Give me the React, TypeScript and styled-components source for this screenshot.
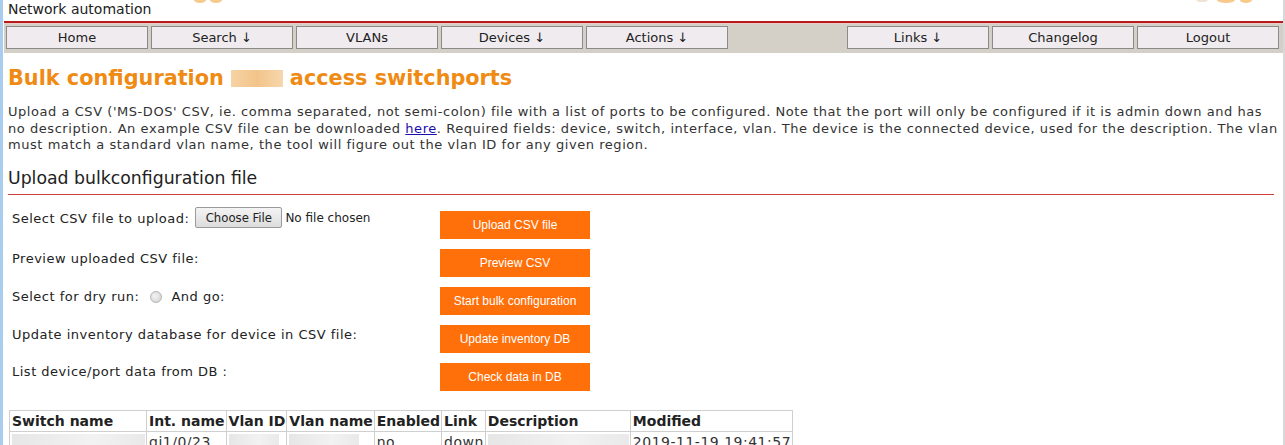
import React from 'react';
import styled, { createGlobalStyle } from 'styled-components';

const GlobalStyle = createGlobalStyle`
  html, body {
    margin: 0;
    padding: 0;
    background: #fff;
  }
  body {
    font-family: 'DejaVu Sans', Verdana, sans-serif;
    color: #222;
    overflow: hidden;
  }
`;

const condensed = `'DejaVu Sans Condensed', 'DejaVu Sans', Verdana, sans-serif`;

const Page = styled.div`
  min-height: 445px;
  border-left: 3px solid #a9cdee;
  border-right: 2px solid #d8d8d8;
  box-sizing: border-box;
  padding-left: 1px;
`;

const Header = styled.div`
  position: relative;
  height: 21px;
  padding-left: 4px;
  border-bottom: 2px solid #b51c1c;
  box-shadow: 0 1px 0 #f0c8c8;
`;

const SiteName = styled.div`
  font-size: 14px;
  line-height: 19px;
  color: #222;
`;

const LogoBits = styled.svg`
  position: absolute;
  top: 0;
`;

const NavBar = styled.nav`
  display: flex;
  gap: 3px;
  margin-top: 1px;
  padding: 2px 4px 4px 2px;
  background: #d4d0c8;
`;

const NavButton = styled.div`
  width: 140px;
  height: 21px;
  box-sizing: content-box;
  border: 1px solid #8a8a8a;
  background: #efebef;
  font-size: 13px;
  line-height: 21px;
  text-align: center;
  color: #222;
  cursor: pointer;
`;

const Spacer = styled.div`
  flex: 1;
`;

const Content = styled.main`
  padding: 0 3px 0 4px;
`;

const Title = styled.h1`
  margin: 12px 0 0;
  font-size: 20.8px;
  font-weight: bold;
  color: #ef8b13;
  line-height: 26px;
  display: flex;
  align-items: center;
  gap: 7px;
`;

const Redacted = styled.span<{ $w: number }>`
  display: inline-block;
  width: ${(p) => p.$w}px;
  height: 17px;
  background: linear-gradient(90deg, #f6d3a4, #f2c48a 50%, #f7d7ad);
`;

const Intro = styled.p`
  margin: 13px 0 0;
  font-size: 13px;
  letter-spacing: 0.55px;
  line-height: 16.5px;
  color: #333;

  a {
    color: #1a0dab;
    text-decoration: underline;
  }
`;

const SectionTitle = styled.h2`
  margin: 13px 6px 0 0;
  padding-bottom: 5px;
  font-size: 17.3px;
  font-weight: normal;
  color: #222;
  line-height: 22px;
  border-bottom: 1px solid #d0413d;
`;

const Form = styled.div`
  display: grid;
  grid-template-columns: 428px 150px;
  row-gap: 10px;
  padding: 16px 0 0 4px;
`;

const Label = styled.div<{ $top?: number }>`
  display: flex;
  align-items: flex-start;
  gap: 6px;
  font-size: 13px;
  letter-spacing: 0.5px;
  line-height: 16px;
  color: #222;
  white-space: nowrap;
  padding-top: ${(p) => p.$top ?? 2}px;
`;

const FileInput = styled.input`
  font-family: 'DejaVu Sans', Verdana, sans-serif;
  font-size: 12px;
  letter-spacing: 0;
  margin-top: -4px;
  color: #222;

  &::file-selector-button {
    font-family: ${condensed};
    font-stretch: condensed;
    font-size: 13px;
    height: 21px;
    width: 87px;
    padding: 0 4px;
    margin-right: 3px;
    border: 1px solid #9a9a9a;
    border-radius: 2px;
    background: linear-gradient(#f4f4f4, #dcdcdc);
    color: #222;
  }
`;

const Radio = styled.span`
  display: inline-block;
  width: 10px;
  height: 10px;
  margin: 2px 3px 0 5px;
  border-radius: 50%;
  border: 1px solid #b5b5b5;
  background: radial-gradient(circle at 40% 40%, #f4f4f4, #cfcfcf);
`;

const ActionButton = styled.button`
  width: 150px;
  height: 28px;
  border: none;
  background: #ff6f0a;
  color: #fff;
  font-family: 'Liberation Sans', Arial, sans-serif;
  font-size: 12px;
  cursor: pointer;
  padding: 0;
`;

const TableWrap = styled.div`
  padding: 19px 0 0 1px;
`;

const Table = styled.table`
  border-collapse: collapse;

  th,
  td {
    border: 1px solid #cfcfcf;
    padding: 0 1px 0 2px;
    height: 20px;
    text-align: left;
    white-space: nowrap;
  }

  th {
    font-size: 14px;
    font-weight: bold;
    color: #222;
  }

  td {
    font-size: 14px;
    letter-spacing: 0.5px;
    color: #333;
  }
`;

const Blur = styled.span<{ $w: number }>`
  display: inline-block;
  width: ${(p) => p.$w}px;
  height: 16px;
  vertical-align: middle;
  background: linear-gradient(90deg, #e6e6e6, #f2f2f2 60%, #e9e9e9);
`;

const navLeft = ['Home', 'Search ↓', 'VLANs', 'Devices ↓', 'Actions ↓'];
const navRight = ['Links ↓', 'Changelog', 'Logout'];

const columns = [
  'Switch name',
  'Int. name',
  'Vlan ID',
  'Vlan name',
  'Enabled',
  'Link',
  'Description',
  'Modified',
];

export default function App() {
  return (
    <Page>
      <GlobalStyle />
      <Header>
        <SiteName>Network automation</SiteName>
        <LogoBits width="40" height="5" style={{ left: 186 }}>
          <ellipse cx="10" cy="0" rx="6" ry="3" fill="#f3b35a" opacity="0.7" />
          <ellipse cx="26" cy="0" rx="6" ry="3" fill="#f3b35a" opacity="0.7" />
        </LogoBits>
        <LogoBits width="70" height="5" style={{ left: 1186 }}>
          <ellipse cx="12" cy="0" rx="6" ry="2" fill="#e8d9c0" opacity="0.7" />
          <ellipse cx="36" cy="0" rx="9" ry="3" fill="#f3b35a" opacity="0.7" />
          <ellipse cx="56" cy="0" rx="6" ry="3" fill="#f3b35a" opacity="0.7" />
        </LogoBits>
      </Header>
      <NavBar>
        {navLeft.map((n) => (
          <NavButton key={n}>{n}</NavButton>
        ))}
        <Spacer />
        {navRight.map((n) => (
          <NavButton key={n}>{n}</NavButton>
        ))}
      </NavBar>
      <Content>
        <Title>
          Bulk configuration <Redacted $w={52} /> access switchports
        </Title>
        <Intro>
          Upload a CSV ('MS-DOS' CSV, ie. comma separated, not semi-colon) file with a list of ports
          to be configured. Note that the port will only be configured if it is admin down and has no
          description. An example CSV file can be downloaded <a href="#">here</a>. Required fields:
          device, switch, interface, vlan. The device is the connected device, used for the
          description. The vlan must match a standard vlan name, the tool will figure out the vlan ID
          for any given region.
        </Intro>
        <SectionTitle>Upload bulkconfiguration file</SectionTitle>
        <Form>
          <Label $top={0}>
            Select CSV file to upload: <FileInput type="file" />
          </Label>
          <ActionButton>Upload CSV file</ActionButton>
          <Label>Preview uploaded CSV file:</Label>
          <ActionButton>Preview CSV</ActionButton>
          <Label>
            Select for dry run: <Radio /> And go:
          </Label>
          <ActionButton>Start bulk configuration</ActionButton>
          <Label>Update inventory database for device in CSV file:</Label>
          <ActionButton>Update inventory DB</ActionButton>
          <Label $top={1}>List device/port data from DB :</Label>
          <ActionButton>Check data in DB</ActionButton>
        </Form>
        <TableWrap>
          <Table>
            <thead>
              <tr>
                {columns.map((c) => (
                  <th key={c}>{c}</th>
                ))}
              </tr>
            </thead>
            <tbody>
              <tr>
                <td>
                  <Blur $w={133} />
                </td>
                <td>gi1/0/23</td>
                <td>
                  <Blur $w={50} />
                </td>
                <td>
                  <Blur $w={70} />
                </td>
                <td>no</td>
                <td>down</td>
                <td>
                  <Blur $w={141} />
                </td>
                <td>2019-11-19 19:41:57</td>
              </tr>
            </tbody>
          </Table>
        </TableWrap>
      </Content>
    </Page>
  );
}
